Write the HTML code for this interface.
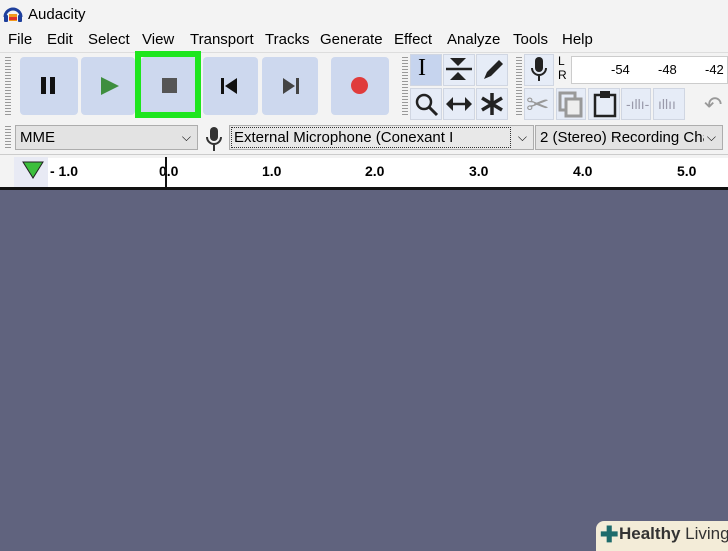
<!DOCTYPE html>
<html><head><style>
*{margin:0;padding:0;box-sizing:border-box}
body{width:728px;height:546px;overflow:hidden;background:#60637e;font-family:"Liberation Sans",sans-serif;position:relative}
.a{position:absolute}
.top{left:0;top:0;width:728px;height:188px;background:#f3f3f3}
.m{position:absolute;top:31px;font-size:15px}
.btn{position:absolute;top:57px;height:58px;background:#cdd8ee;border-radius:4px}
.tb{position:absolute;background:#e6ecf7;border:1px solid #d0d6e2}
.grip{position:absolute;width:6px;background:repeating-linear-gradient(#999 0 1px,transparent 1px 3px)}
.sel{position:absolute;top:125px;height:25px;background:#e3e3e3;border:1px solid #adadad;font-size:15px;line-height:23px;padding-left:4px;color:#000;white-space:nowrap;overflow:hidden}
.r{position:absolute;top:163px;font-size:14px;font-weight:bold}
</style></head><body>
<div class="a top"></div>
<svg class="a" style="left:3px;top:5px" width="20" height="18"><path d="M2 12 A8 8 0 0 1 18 12" stroke="#1e3f9c" stroke-width="3" fill="none"/><rect x="1" y="10" width="4" height="7" rx="1" fill="#1e3f9c"/><rect x="15" y="10" width="4" height="7" rx="1" fill="#1e3f9c"/><rect x="6" y="9" width="8" height="7" fill="#f29a1d"/><rect x="6" y="12" width="8" height="3" fill="#e0332a"/></svg>
<div class="a" style="left:28px;top:6px;font-size:15px">Audacity</div>
<div class="m" style="left:8px">File</div>
<div class="m" style="left:47px">Edit</div>
<div class="m" style="left:88px">Select</div>
<div class="m" style="left:142px">View</div>
<div class="m" style="left:190px">Transport</div>
<div class="m" style="left:265px">Tracks</div>
<div class="m" style="left:320px">Generate</div>
<div class="m" style="left:394px">Effect</div>
<div class="m" style="left:447px">Analyze</div>
<div class="m" style="left:513px">Tools</div>
<div class="m" style="left:562px">Help</div>
<div class="a" style="left:0;top:52px;width:728px;height:1px;background:#ddd"></div>
<div class="grip" style="left:5px;top:57px;height:58px"></div>
<div class="btn" style="left:20px;width:58px"></div>
<div class="btn" style="left:81px;width:54px"></div>
<div class="btn" style="left:141px;width:56px"></div>
<div class="btn" style="left:203px;width:55px"></div>
<div class="btn" style="left:262px;width:56px"></div>
<div class="btn" style="left:331px;width:58px"></div>
<div class="a" style="left:135px;top:51px;width:66px;height:67px;border:6px solid #1ee61e"></div>
<div class="a" style="left:41px;top:77px;width:5px;height:17px;background:#111"></div>
<div class="a" style="left:50px;top:77px;width:5px;height:17px;background:#111"></div>
<svg class="a" style="left:100px;top:76px" width="20" height="20"><path d="M1 1 L19 10 L1 19Z" fill="#3e8e3e"/></svg>
<div class="a" style="left:162px;top:78px;width:15px;height:15px;background:#555"></div>
<svg class="a" style="left:221px;top:78px" width="18" height="16"><rect x="0" y="0" width="3" height="16" fill="#111"/><path d="M16 0 L4 8 L16 16Z" fill="#111"/></svg>
<svg class="a" style="left:282px;top:78px" width="18" height="16"><path d="M1 0 L13 8 L1 16Z" fill="#444"/><rect x="14" y="0" width="3" height="16" fill="#444"/></svg>
<div class="a" style="left:351px;top:77px;width:17px;height:17px;border-radius:50%;background:#e03c3c"></div>
<div class="grip" style="left:402px;top:57px;height:58px"></div>
<div class="tb" style="left:410px;top:54px;width:32px;height:32px;background:#c6d4ee"></div>
<div class="tb" style="left:443px;top:54px;width:32px;height:32px"></div>
<div class="tb" style="left:476px;top:54px;width:32px;height:32px"></div>
<div class="tb" style="left:410px;top:88px;width:32px;height:32px"></div>
<div class="tb" style="left:443px;top:88px;width:32px;height:32px"></div>
<div class="tb" style="left:476px;top:88px;width:32px;height:32px"></div>
<div class="a" style="left:418px;top:55px;font-size:24px;font-family:'Liberation Serif',serif">I</div>
<svg class="a" style="left:444px;top:56px" width="30" height="28"><path d="M6 2h16l-8 8z M6 24h16l-8-8z" fill="#222"/><path d="M2 13h26" stroke="#222" stroke-width="2.5"/></svg>
<svg class="a" style="left:480px;top:57px" width="26" height="26"><path d="M4 22 L7 15 L19 3 L23 7 L11 19Z" fill="#222"/></svg>
<svg class="a" style="left:414px;top:92px" width="26" height="26"><circle cx="10" cy="10" r="7" stroke="#222" stroke-width="2.5" fill="none"/><path d="M15 15 L23 23" stroke="#222" stroke-width="3"/></svg>
<svg class="a" style="left:445px;top:94px" width="28" height="20"><path d="M3 10h22" stroke="#222" stroke-width="2.5"/><path d="M1 10l7-7v14z M27 10l-7-7v14z" fill="#222"/></svg>
<svg class="a" style="left:479px;top:91px" width="26" height="26"><path d="M13 2v22 M3 7l20 12 M3 19l20-12" stroke="#222" stroke-width="3.5"/></svg>
<div class="grip" style="left:516px;top:57px;height:58px"></div>
<div class="tb" style="left:524px;top:54px;width:30px;height:32px"></div>
<svg class="a" style="left:530px;top:56px" width="18" height="28"><rect x="5" y="1" width="8" height="15" rx="4" fill="#222"/><path d="M2 12 A7 7 0 0 0 16 12 M9 19v6" stroke="#222" stroke-width="2" fill="none"/></svg>
<div class="a" style="left:558px;top:54px;font-size:12px;line-height:14px">L<br>R</div>
<div class="a" style="left:571px;top:56px;width:157px;height:28px;background:#fff;border:1px solid #ccc"></div>
<div class="a" style="left:611px;top:62px;font-size:13px">-54</div>
<div class="a" style="left:658px;top:62px;font-size:13px">-48</div>
<div class="a" style="left:705px;top:62px;font-size:13px">-42</div>
<div class="tb" style="left:524px;top:88px;width:30px;height:32px"></div>
<div class="tb" style="left:556px;top:88px;width:30px;height:32px"></div>
<div class="tb" style="left:588px;top:88px;width:32px;height:32px"></div>
<div class="tb" style="left:621px;top:88px;width:30px;height:32px"></div>
<div class="tb" style="left:653px;top:88px;width:32px;height:32px"></div>
<div class="a" style="left:526px;top:88px;font-size:28px;color:#999">✂</div>
<svg class="a" style="left:558px;top:91px" width="26" height="28"><rect x="2" y="2" width="15" height="17" stroke="#999" stroke-width="3" fill="none"/><rect x="8" y="8" width="15" height="17" stroke="#999" stroke-width="3" fill="#eee"/></svg>
<svg class="a" style="left:592px;top:90px" width="26" height="28"><rect x="3" y="5" width="20" height="21" stroke="#222" stroke-width="2.5" fill="none"/><rect x="8" y="1" width="10" height="7" fill="#222"/></svg>
<div class="a" style="left:626px;top:96px;font-size:14px;color:#99a">-ıllı-</div>
<div class="a" style="left:658px;top:96px;font-size:14px;color:#99a">ıllıı</div>
<div class="a" style="left:704px;top:92px;font-size:22px;color:#999">↶</div>
<div class="grip" style="left:5px;top:126px;height:22px"></div>
<div class="sel" style="left:15px;width:183px">MME<span style="position:absolute;right:6px;font-size:12px">⌵</span></div>
<svg class="a" style="left:205px;top:126px" width="18" height="26"><rect x="5" y="1" width="8" height="14" rx="4" fill="#333"/><path d="M2 11 A7 7 0 0 0 16 11 M9 18v7" stroke="#333" stroke-width="2" fill="none"/></svg>
<div class="sel" style="left:229px;width:305px;background:#e8e8e8">External Microphone (Conexant I<span style="position:absolute;right:6px;font-size:12px">⌵</span><div style="position:absolute;left:1px;top:1px;width:280px;height:21px;border:1px dotted #333"></div></div>
<div class="sel" style="left:535px;width:188px">2 (Stereo) Recording Chai<span style="position:absolute;right:6px;font-size:12px;background:#e3e3e3;padding-left:3px">⌵</span></div>
<div class="a" style="left:0;top:154px;width:728px;height:1px;background:#ccc"></div>
<div class="a" style="left:14px;top:157px;width:34px;height:31px;background:#e8eaf4"></div>
<svg class="a" style="left:22px;top:161px" width="22" height="18"><path d="M1 1h20l-10 16z" fill="#3cbf3c" stroke="#222"/></svg>
<div class="a" style="left:48px;top:158px;width:680px;height:30px;background:#fff"></div>
<div class="r" style="left:50px">- 1.0</div>
<div class="r" style="left:159px">0.0</div>
<div class="r" style="left:262px">1.0</div>
<div class="r" style="left:365px">2.0</div>
<div class="r" style="left:469px">3.0</div>
<div class="r" style="left:573px">4.0</div>
<div class="r" style="left:677px">5.0</div>
<div class="a" style="left:165px;top:157px;width:2px;height:31px;background:#111"></div>
<div class="a" style="left:0;top:187px;width:728px;height:3px;background:#111"></div>
<div class="a" style="left:596px;top:521px;width:140px;height:30px;background:#f3ecd8;border-radius:8px 0 0 0"></div>
<div class="a" style="left:600px;top:522px;font-size:22px;font-weight:bold;color:#1e6b6b">✚</div>
<div class="a" style="left:619px;top:524px;font-size:17px;color:#333;white-space:nowrap"><b>Healthy</b> Living</div>
</body></html>
